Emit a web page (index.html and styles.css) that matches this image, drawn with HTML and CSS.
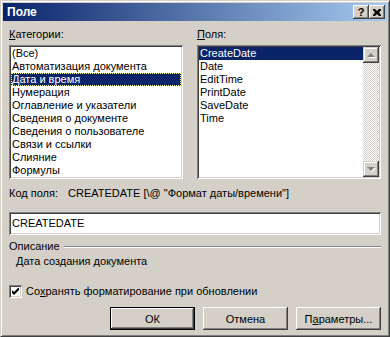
FILE: index.html
```html
<!DOCTYPE html>
<html lang="ru">
<head>
  <meta charset="UTF-8">
  <title>Поле</title>
  <link rel="stylesheet" href="styles.css">
</head>
<body>
  <div class="window">
    <div class="titlebar">
      <span class="title">Поле</span>
      <div class="title-btns">
        <span class="tbtn help">?</span>
        <span class="tbtn close">
          <svg width="8" height="7" viewBox="0 0 8 7"><path d="M0 0h2l2 2 2-2h2v1L6 3.5 8 6v1H6L4 5 2 7H0V6l2-2.5L0 1z" fill="#000"/></svg>
        </span>
      </div>
    </div>

    <div class="dialog-body">
      <div class="lists">
        <div class="col col-cat">
          <div class="label"><u>К</u>атегории:</div>
          <ul class="listbox">
            <li>(Все)</li>
            <li>Автоматизация документа</li>
            <li class="selected focus">Дата и время</li>
            <li>Нумерация</li>
            <li>Оглавление и указатели</li>
            <li>Сведения о документе</li>
            <li>Сведения о пользователе</li>
            <li>Связи и ссылки</li>
            <li>Слияние</li>
            <li>Формулы</li>
          </ul>
        </div>
        <div class="col col-fields">
          <div class="label"><u>П</u>оля:</div>
          <div class="listbox scroll-list">
            <ul class="items">
              <li class="selected">CreateDate</li>
              <li>Date</li>
              <li>EditTime</li>
              <li>PrintDate</li>
              <li>SaveDate</li>
              <li>Time</li>
            </ul>
            <div class="scrollbar">
              <span class="sb-btn"><span class="arrow up"></span></span>
              <span class="sb-track"></span>
              <span class="sb-btn"><span class="arrow down"></span></span>
            </div>
          </div>
        </div>
      </div>

      <div class="code-row">
        <span class="code-label">Ко<u>д</u> поля:</span>
        <span class="code-text">CREATEDATE [\@ "Формат даты/времени"]</span>
      </div>

      <div class="textbox">CREATEDATE</div>

      <div class="group">
        <span>Описание</span>
        <span class="rule"></span>
      </div>
      <div class="desc">Дата создания документа</div>

      <div class="check">
        <span class="checkbox">
          <svg width="7" height="7" viewBox="0 0 7 7"><path d="M0 2v3l2 2 5-5V-1L2 4z" fill="#000"/></svg>
        </span>
        <span>Со<u>х</u>ранять форматирование при обновлении</span>
      </div>

      <div class="buttons">
        <span class="btn default">ОК</span>
        <span class="btn">Отмена</span>
        <span class="btn">П<u>а</u>раметры...</span>
      </div>
    </div>
  </div>
</body>
</html>
```

FILE: styles.css
```css
:root {
  --face: #d4d0c8;
  --shadow: #808080;
  --dark: #404040;
  --hilite: #ffffff;
  --select: #0a246a;
}
html, body {
  margin: 0;
  padding: 0;
  background: var(--face);
}
body {
  font-family: 'Liberation Sans', Arial, sans-serif;
  font-size: 11px;
  color: #000;
}
u { text-decoration: underline; text-underline-offset: 1px; }

.window {
  width: 390px;
  height: 337px;
  box-sizing: border-box;
  background: var(--face);
  border: 1px solid;
  border-color: var(--face) var(--dark) var(--dark) var(--face);
  box-shadow: inset 1px 1px var(--hilite), inset -1px -1px var(--shadow);
  padding: 2px;
}

/* title bar */
.titlebar {
  height: 18px;
  display: flex;
  align-items: center;
  justify-content: space-between;
  background: linear-gradient(90deg, var(--select) 0%, #a6caf0 100%);
  padding: 0 2px 0 4px;
}
.title {
  color: #fff;
  font-weight: bold;
  font-size: 12px;
}
.title-btns { display: flex; }
.tbtn {
  width: 16px;
  height: 14px;
  box-sizing: border-box;
  display: flex;
  align-items: center;
  justify-content: center;
  background: var(--face);
  box-shadow: inset -1px -1px var(--dark), inset 1px 1px var(--hilite), inset -2px -2px var(--shadow);
  font-weight: bold;
  font-size: 11px;
  line-height: 14px;
}

/* body */
.dialog-body {
  padding: 7px 6px 0 6px;
}
.label {
  height: 13px;
  line-height: 13px;
  margin-bottom: 4px;
}
.lists {
  display: flex;
  gap: 14px;
}
.col-cat { width: 174px; }
.col-fields { width: 184px; }

.listbox {
  list-style: none;
  margin: 0;
  padding: 2px;
  height: 134px;
  box-sizing: border-box;
  background: #fff;
  box-shadow: inset 1px 1px var(--shadow), inset -1px -1px var(--hilite),
              inset 2px 2px var(--dark), inset -2px -2px var(--face);
  overflow: hidden;
}
.listbox li {
  height: 13px;
  line-height: 13px;
  padding-left: 1px;
  white-space: nowrap;
  box-sizing: border-box;
}
.listbox li.selected {
  background: var(--select);
  color: #fff;
}
.listbox li.focus {
  outline: 1px dotted #ffff80;
  outline-offset: -1px;
}

.scroll-list {
  display: flex;
}
.scroll-list .items {
  list-style: none;
  margin: 0;
  padding: 0;
  flex: 1;
}
.scrollbar {
  width: 16px;
  display: flex;
  flex-direction: column;
}
.sb-track {
  flex: 1;
  background: repeating-conic-gradient(#fff 0 25%, var(--face) 0 50%) 0 0 / 2px 2px;
}
.sb-btn {
  height: 16px;
  display: flex;
  align-items: center;
  justify-content: center;
  background: var(--face);
  box-shadow: inset -1px -1px var(--dark), inset 1px 1px var(--face),
              inset -2px -2px var(--shadow), inset 2px 2px var(--hilite);
}
.arrow {
  width: 0;
  height: 0;
  border-left: 4px solid transparent;
  border-right: 4px solid transparent;
}
.arrow.up { border-bottom: 4px solid var(--shadow); filter: drop-shadow(1px 1px 0 #fff); }
.arrow.down { border-top: 4px solid var(--shadow); filter: drop-shadow(1px 1px 0 #fff); }

.code-row {
  margin-top: 8px;
  height: 13px;
  line-height: 13px;
  display: flex;
  gap: 10px;
}

.textbox {
  margin-top: 12px;
  height: 23px;
  line-height: 19px;
  box-sizing: border-box;
  padding: 2px 3px;
  background: #fff;
  box-shadow: inset 1px 1px var(--shadow), inset -1px -1px var(--hilite),
              inset 2px 2px var(--dark), inset -2px -2px var(--face);
}

.group {
  margin-top: 5px;
  height: 13px;
  line-height: 13px;
  display: flex;
  align-items: center;
  gap: 4px;
}
.group .rule {
  flex: 1;
  height: 1px;
  background: var(--shadow);
  border-bottom: 1px solid #fff;
}
.desc {
  margin-top: 2px;
  padding-left: 7px;
  height: 13px;
  line-height: 13px;
}

.check {
  margin-top: 17px;
  display: flex;
  align-items: center;
  gap: 4px;
  height: 13px;
  line-height: 13px;
}
.checkbox {
  width: 13px;
  height: 13px;
  box-sizing: border-box;
  display: flex;
  align-items: center;
  justify-content: center;
  background: #fff;
  box-shadow: inset 1px 1px var(--shadow), inset -1px -1px var(--hilite),
              inset 2px 2px var(--dark), inset -2px -2px var(--face);
}

.buttons {
  margin-top: 9px;
  display: flex;
  justify-content: flex-end;
  gap: 8px;
}
.btn {
  width: 85px;
  height: 23px;
  box-sizing: border-box;
  display: flex;
  align-items: center;
  justify-content: center;
  background: var(--face);
  box-shadow: inset -1px -1px var(--dark), inset 1px 1px var(--hilite),
              inset -2px -2px var(--shadow), inset 2px 2px var(--face);
}
.btn.default {
  border: 1px solid #000;
  box-shadow: inset -1px -1px var(--dark), inset 1px 1px var(--hilite),
              inset -2px -2px var(--shadow);
}
```
